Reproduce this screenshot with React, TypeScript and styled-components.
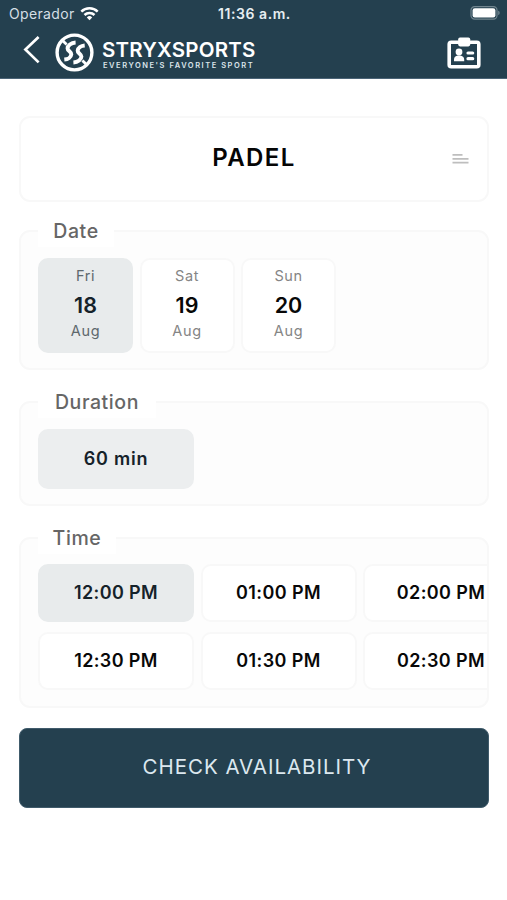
import React from "react";
import styled, { createGlobalStyle } from "styled-components";

const GlobalStyle = createGlobalStyle`
  * { box-sizing: border-box; }
  body { margin: 0; background: #fff; font-family: Inter, sans-serif; overflow: hidden; }
  button { font: inherit; margin: 0; padding: 0; }
`;

const Screen = styled.div`
  width: 507px;
  height: 900px;
  background: #fff;
  overflow: hidden;
`;

const Header = styled.header`
  height: 79px;
  background: #24404f;
  border-bottom: 1px solid #4b6477;
  color: #fff;
`;

const StatusBar = styled.div`
  height: 27px;
  padding: 0 7px 0 9px;
  display: grid;
  grid-template-columns: 1fr auto 1fr;
  align-items: center;
`;

const Carrier = styled.div`
  display: flex;
  align-items: center;
  gap: 5px;
  font-size: 14px;
  letter-spacing: 0.35px;
  color: #d5dfe5;
`;

const Clock = styled.div`
  font-size: 14px;
  font-weight: 600;
  letter-spacing: 0.55px;
  color: #e6edf1;
`;

const BatterySlot = styled.div`
  display: flex;
  justify-content: flex-end;
  margin-top: -1px;
`;

const NavBar = styled.nav`
  height: 51px;
  padding: 0 26px 0 22px;
  display: flex;
  align-items: center;
`;

const IconButton = styled.button`
  display: flex;
  border: 0;
  background: none;
  color: inherit;
`;

const BackButton = styled(IconButton)`
  margin-top: -5px;
`;

const Brand = styled.div`
  display: flex;
  align-items: center;
  gap: 8px;
  margin: -1px auto 0 13px;
`;

const BrandText = styled.div`
  display: flex;
  flex-direction: column;
  padding-top: 2px;
`;

const BrandName = styled.div`
  font-size: 20.5px;
  line-height: 25px;
  font-weight: 600;
  letter-spacing: 0.2px;
  white-space: nowrap;
`;

const BrandTagline = styled.div`
  font-size: 7.5px;
  line-height: 8px;
  font-weight: 600;
  letter-spacing: 1.54px;
  padding-left: 1px;
  color: #dce5eb;
  white-space: nowrap;
`;

const Content = styled.main`
  padding: 37px 18px 0 19px;
  display: flex;
  flex-direction: column;
`;

const SportSelector = styled.button`
  height: 86px;
  padding: 0 18px;
  display: grid;
  grid-template-columns: 1fr auto 1fr;
  align-items: center;
  border: 2px solid #f8f8f8;
  border-radius: 11px;
  background: #fff;
  color: #050505;
`;

const SportName = styled.span`
  grid-column: 2;
  font-size: 24px;
  line-height: 28px;
  font-weight: 600;
  letter-spacing: 1.4px;
  margin: -3px 0 0;
`;

const SelectorIcon = styled.span`
  display: flex;
  justify-content: flex-end;
`;

const Group = styled.section<{ $height: number; $top: number }>`
  height: ${(p) => p.$height}px;
  margin-top: ${(p) => p.$top}px;
  border: 2px solid #f8f8f8;
  border-radius: 11px;
  background: #fdfdfd;
`;

const GroupTitle = styled.h2<{ $width: number }>`
  margin: -17px 0 0 17px;
  width: ${(p) => p.$width}px;
  height: 32px;
  font-size: 19.5px;
  line-height: 32px;
  font-weight: 500;
  letter-spacing: 0.6px;
  text-align: center;
  color: #666;
  background: #fff;
`;

const Options = styled.div`
  display: flex;
  gap: 6.5px;
  padding: 11px 0 0 17px;
`;

const TimeOptions = styled.div`
  display: grid;
  grid-template-columns: repeat(3, 156px);
  grid-auto-rows: 58px;
  gap: 10px 6.5px;
  padding: 10px 0 0 17px;
  overflow: hidden;
`;

const Option = styled.button<{ $selected?: boolean }>`
  border: 2px solid ${(p) => (p.$selected ? "#e8ebec" : "#f8f8f8")};
  border-radius: 10px;
  background: ${(p) => (p.$selected ? "#e8ebec" : "#fff")};
  color: ${(p) => (p.$selected ? "#15222a" : "#080808")};
`;

const DateOption = styled(Option)`
  width: 95px;
  height: 95px;
  display: flex;
  flex-direction: column;
  align-items: center;
`;

const DateCaption = styled.span<{ $selected?: boolean }>`
  font-size: 14.5px;
  line-height: 18px;
  letter-spacing: 0.6px;
  margin-top: 7px;
  color: ${(p) => (p.$selected ? "#5e686d" : "#858585")};
`;

const DayNumber = styled.span`
  font-size: 21.5px;
  line-height: 26px;
  font-weight: 600;
  margin-top: 7px;
`;

const MonthCaption = styled(DateCaption)`
  margin-top: 4px;
`;

const DurationOption = styled(Option)`
  width: 156px;
  height: 60px;
  font-size: 18px;
  font-weight: 600;
  letter-spacing: 0.75px;
  background: #eceeef;
  border-color: #eceeef;
  padding-bottom: 2px;
`;

const TimeOption = styled(Option)`
  font-size: 18px;
  font-weight: 600;
  letter-spacing: 0.38px;
  white-space: nowrap;
  padding-bottom: 1px;
`;

const SubmitButton = styled.button`
  height: 80px;
  margin: 20px 0 0;
  padding: 0 0 3px 6px;
  border: 1px solid #405b6b;
  border-radius: 8px;
  background: #24404f;
  color: #dce8ef;
  font-size: 20.5px;
  font-weight: 400;
  letter-spacing: 0.97px;
`;

const WifiIcon = () => (
  <svg width="19" height="15" viewBox="0 0 19 15" fill="none" stroke="#fff" strokeWidth="2.5">
    <path d="M1.3 5.6a11.7 11.7 0 0 1 16.4 0M4.5 9a7.1 7.1 0 0 1 10 0" />
    <path d="M9.5 14.2 6.8 11.4a3.8 3.8 0 0 1 5.4 0z" fill="#fff" stroke="none" />
  </svg>
);

const BatteryIcon = () => (
  <svg width="30" height="14" viewBox="0 0 30 14" fill="none">
    <rect x="1" y=".7" width="26" height="12.4" rx="3.6" stroke="#71858f" strokeWidth="1.2" />
    <rect x="2.6" y="2.3" width="22.8" height="9.2" rx="2.2" fill="#fff" />
    <path d="M28.4 4.8c1.5.5 1.5 3.7 0 4.2z" fill="#8799a3" />
  </svg>
);

const BackIcon = () => (
  <svg width="20" height="30" viewBox="0 0 20 30" fill="none" stroke="#fff" strokeWidth="2.7">
    <path d="M16.6 2 3.4 14.5 16.6 27.4" />
  </svg>
);

const LogoMark = () => (
  <svg width="39" height="39" viewBox="0 0 39 39" fill="none" stroke="#fff">
    <circle cx="19.5" cy="19.5" r="17.4" strokeWidth="3.4" />
    <path d="m7 7 4.6 4.6M27.4 27.4l4.6 4.6" strokeWidth="2.8" />
    <g strokeWidth="4">
      <path d="M20.6 9.6C16 9.8 12.6 12.6 12.6 15.4c0 2.6 4 3.2 3.7 6-.3 2.8-3.2 4.9-7 5.2" />
      <path d="M29.7 12.4c-3.8.3-6.7 2.4-7 5.2-.3 2.8 3.7 3.4 3.7 6 0 2.8-3.4 5.6-8 5.8" />
    </g>
  </svg>
);

const BadgeIcon = () => (
  <svg width="34" height="32" viewBox="0 0 34 32" fill="none">
    <rect x="2.2" y="5.2" width="29.6" height="24.6" rx="2" stroke="#fff" strokeWidth="3.6" />
    <rect x="11.2" y=".4" width="12" height="9" rx="1.8" fill="#fff" />
    <circle cx="12" cy="15" r="3.4" fill="#fff" />
    <path d="M7 24.2v-1.4c0-3 2.2-4.3 5-4.3s5.2 1.3 5.2 4.3v1.4z" fill="#fff" />
    <path d="M21 16h4.7M21 21.7h4.7" stroke="#fff" strokeWidth="3.2" strokeLinecap="round" />
  </svg>
);

const LinesIcon = () => (
  <svg width="17" height="12" viewBox="0 0 17 12" stroke="#bebebe" strokeWidth="1.7">
    <path d="M.5 1.9h10M.5 5.8h16M.5 9.7h16" />
  </svg>
);

const dates = [
  { weekday: "Fri", day: "18", month: "Aug" },
  { weekday: "Sat", day: "19", month: "Aug" },
  { weekday: "Sun", day: "20", month: "Aug" },
];

const times = ["12:00 PM", "01:00 PM", "02:00 PM", "12:30 PM", "01:30 PM", "02:30 PM"];

export default function App() {
  return (
    <Screen>
      <GlobalStyle />
      <Header>
        <StatusBar>
          <Carrier>Operador <WifiIcon /></Carrier>
          <Clock>11:36 a.m.</Clock>
          <BatterySlot><BatteryIcon /></BatterySlot>
        </StatusBar>
        <NavBar>
          <BackButton aria-label="Back"><BackIcon /></BackButton>
          <Brand>
            <LogoMark />
            <BrandText>
              <BrandName>STRYXSPORTS</BrandName>
              <BrandTagline>EVERYONE'S FAVORITE SPORT</BrandTagline>
            </BrandText>
          </Brand>
          <IconButton aria-label="Profile"><BadgeIcon /></IconButton>
        </NavBar>
      </Header>
      <Content>
        <SportSelector>
          <SportName>PADEL</SportName>
          <SelectorIcon><LinesIcon /></SelectorIcon>
        </SportSelector>
        <Group $height={140} $top={28}>
          <GroupTitle $width={76}>Date</GroupTitle>
          <Options>
            {dates.map((d, i) => (
              <DateOption key={d.day} $selected={i === 0}>
                <DateCaption $selected={i === 0}>{d.weekday}</DateCaption>
                <DayNumber>{d.day}</DayNumber>
                <MonthCaption $selected={i === 0}>{d.month}</MonthCaption>
              </DateOption>
            ))}
          </Options>
        </Group>
        <Group $height={105} $top={31}>
          <GroupTitle $width={118}>Duration</GroupTitle>
          <Options>
            <DurationOption $selected>60 min</DurationOption>
          </Options>
        </Group>
        <Group $height={171} $top={31}>
          <GroupTitle $width={78}>Time</GroupTitle>
          <TimeOptions>
            {times.map((t, i) => (
              <TimeOption key={t} $selected={i === 0}>{t}</TimeOption>
            ))}
          </TimeOptions>
        </Group>
        <SubmitButton>CHECK AVAILABILITY</SubmitButton>
      </Content>
    </Screen>
  );
}
